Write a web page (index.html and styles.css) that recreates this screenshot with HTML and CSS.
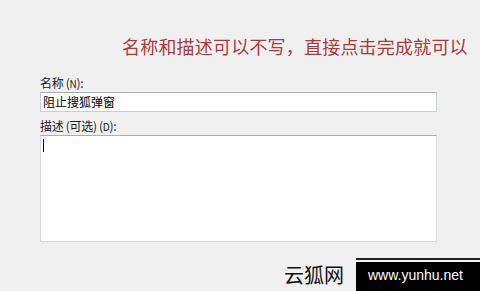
FILE: index.html
```html
<!DOCTYPE html>
<html lang="zh-CN">
<head>
<meta charset="utf-8">
<link rel="stylesheet" href="styles.css">
</head>
<body>
<div class="page">
  <div class="hint">名称和描述可以不写，直接点击完成就可以</div>
  <div class="form">
    <div class="label">名称 (<span class="key">N</span>):</div>
    <div class="input">阻止搜狐弹窗</div>
    <div class="label label2">描述 (可选) (<span class="key">D</span>):</div>
    <div class="textarea"><span class="caret"></span></div>
  </div>
  <div class="watermark">
    <span class="wm-cn">云狐网</span>
    <span class="wm-url">www.yunhu.net</span>
  </div>
</div>
</body>
</html>
```
FILE: styles.css
```css
html, body {
  margin: 0;
  padding: 0;
  background: #f0f0f0;
}
.page {
  position: relative;
  width: 480px;
  height: 291px;
  overflow: hidden;
  font-family: "Noto Sans CJK SC", "Liberation Sans", sans-serif;
}
.hint {
  padding: 36px 0 0 122px;
  font-size: 18px;
  line-height: 20px;
  color: #a93a3b;
  letter-spacing: 0.2px;
  white-space: nowrap;
}
.form {
  margin: 20px 0 0 40px;
  width: 397px;
}
.label {
  font-size: 12px;
  line-height: 14px;
  color: #1a1a1a;
  letter-spacing: -0.3px;
}
.key {
  font-size: 10px;
}
.input {
  margin-top: 1px;
  height: 18px;
  border: 1px solid #c8ced6;
  border-top-color: #a9aeb6;
  background: #fff;
  font-size: 12px;
  line-height: 18px;
  padding-left: 2px;
  color: #000;
}
.label2 {
  margin-top: 7px;
}
.textarea {
  margin-top: 1px;
  height: 105px;
  border: 1px solid #d3d9df;
  border-top-color: #a9aeb6;
  background: #fff;
  position: relative;
}
.caret {
  position: absolute;
  left: 2px;
  top: 3px;
  width: 1px;
  height: 13px;
  background: #000;
}
.watermark {
  position: absolute;
  left: 284px;
  top: 256px;
  right: 0;
  bottom: 0;
  display: flex;
  align-items: flex-end;
}
.wm-cn {
  font-size: 20px;
  line-height: 26px;
  color: #111;
  padding-bottom: 3px;
  width: 72px;
}
.wm-url {
  flex: 1;
  height: 29px;
  background: #000;
  color: #fff;
  font-family: "Liberation Sans", Arial, sans-serif;
  font-size: 14px;
  line-height: 27px;
  padding-left: 12px;
  border-top: 2px solid #f0f0f0;
  box-shadow: 0 -2px 0 #222;
}
```
